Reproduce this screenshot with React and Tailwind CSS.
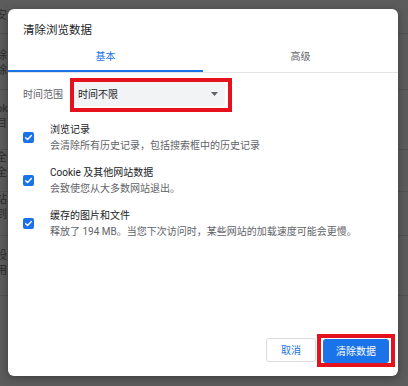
import React from "react";

const rows = [
  { title: "浏览记录", desc: "会清除所有历史记录，包括搜索框中的历史记录" },
  { title: "Cookie 及其他网站数据", desc: "会致使您从大多数网站退出。" },
  {
    title: "缓存的图片和文件",
    desc: "释放了 194 MB。当您下次访问时，某些网站的加载速度可能会更慢。",
  },
];

// bits of the settings page peeking out behind the overlay
const behind = [
  { h: 34, pt: 8, lines: ["安"] },
  { h: 56, pt: 14, lines: ["除", "除"] },
  { h: 60, pt: 11, lines: ["ok", "目"] },
  { h: 42, pt: 0, lines: ["全", "全"] },
  { h: 44, pt: 0, lines: ["站", "到"] },
  { h: 60, pt: 12, lines: ["设", "用"] },
];

function Check() {
  return (
    <div className="w-[11px] h-[11px] shrink-0 rounded-[2px] bg-[#1a73e8] flex items-center justify-center">
      <svg width="9" height="9" viewBox="0 0 12 12" fill="none">
        <path
          d="M2.2 6.2L4.8 8.7L9.8 3.4"
          stroke="white"
          strokeWidth="1.9"
          strokeLinecap="round"
          strokeLinejoin="round"
        />
      </svg>
    </div>
  );
}

export default function App() {
  return (
    <div className="relative w-[408px] h-[386px] overflow-hidden bg-[#5c5c5c] font-[Roboto,'Noto_Sans_CJK_SC',sans-serif]">
      {/* page behind the modal */}
      <div className="flex flex-col">
        {behind.map((b, i) => (
          <div
            key={i}
            style={{ height: b.h, paddingTop: b.pt }}
            className="flex flex-col border-b border-[#525252]"
          >
            {b.lines.map((t, j) => (
              <span
                key={j}
                className="ml-[-4px] text-[11px] leading-[15px] text-[#2c2c2c]"
              >
                {t}
              </span>
            ))}
          </div>
        ))}
      </div>

      {/* dialog */}
      <div className="absolute left-[8px] top-[9px] w-[390px] h-[367px] bg-white rounded-[6px] shadow-[0_2px_8px_rgba(0,0,0,0.35)] flex flex-col">
        <div className="pt-[13px] pl-[15px] text-[11.5px] leading-[16px] text-[#202124]">
          清除浏览数据
        </div>

        <div className="flex border-b border-[#e3e3e3]">
          <div className="flex-1 pt-[12px] pb-[6px] text-center text-[10px] leading-[14px] text-[#1a73e8] border-b-2 border-[#1a73e8]">
            基本
          </div>
          <div className="flex-1 pt-[12px] pb-[6px] text-center text-[10px] leading-[14px] text-[#5f6368] border-b-2 border-transparent">
            高级
          </div>
        </div>

        <div className="px-[15px] pt-[5px]">
          <div className="flex items-center">
            <span className="w-[47px] text-[10px] leading-[14px] text-[#5f6368]">
              时间范围
            </span>
            <div className="border-4 border-[#e5121d] pr-[3px] pb-[2px]">
              <div className="w-[151px] h-[24px] bg-[#f1f3f4] rounded-[3px] flex items-center justify-between pl-[4px] pr-[7px]">
                <span className="text-[10px] text-[#202124]">时间不限</span>
                <svg width="7" height="4" viewBox="0 0 7 4">
                  <path d="M0 0H7L3.5 4Z" fill="#5f6368" />
                </svg>
              </div>
            </div>
          </div>

          <div className="mt-[10px] flex flex-col gap-[12px]">
            {rows.map((r) => (
              <div key={r.title} className="flex items-center gap-[16px]">
                <Check />
                <div className="flex flex-col">
                  <span className="text-[10px] leading-[16px] text-[#202124]">
                    {r.title}
                  </span>
                  <span className="text-[10px] leading-[15px] text-[#5f6368] whitespace-nowrap">
                    {r.desc}
                  </span>
                </div>
              </div>
            ))}
          </div>
        </div>

        <div className="mt-auto flex justify-end items-center pr-[3px] pb-[9px] gap-[1px]">
          <button className="w-[50px] h-[24px] rounded-[3px] border border-[#dadce0] bg-white text-[10px] text-[#1a73e8]">
            取消
          </button>
          <div className="border-4 border-[#e5121d] px-[2px]">
            <button className="w-[66px] h-[24px] rounded-[3px] bg-[#1a73e8] text-[10px] text-white">
              清除数据
            </button>
          </div>
        </div>
      </div>
    </div>
  );
}
